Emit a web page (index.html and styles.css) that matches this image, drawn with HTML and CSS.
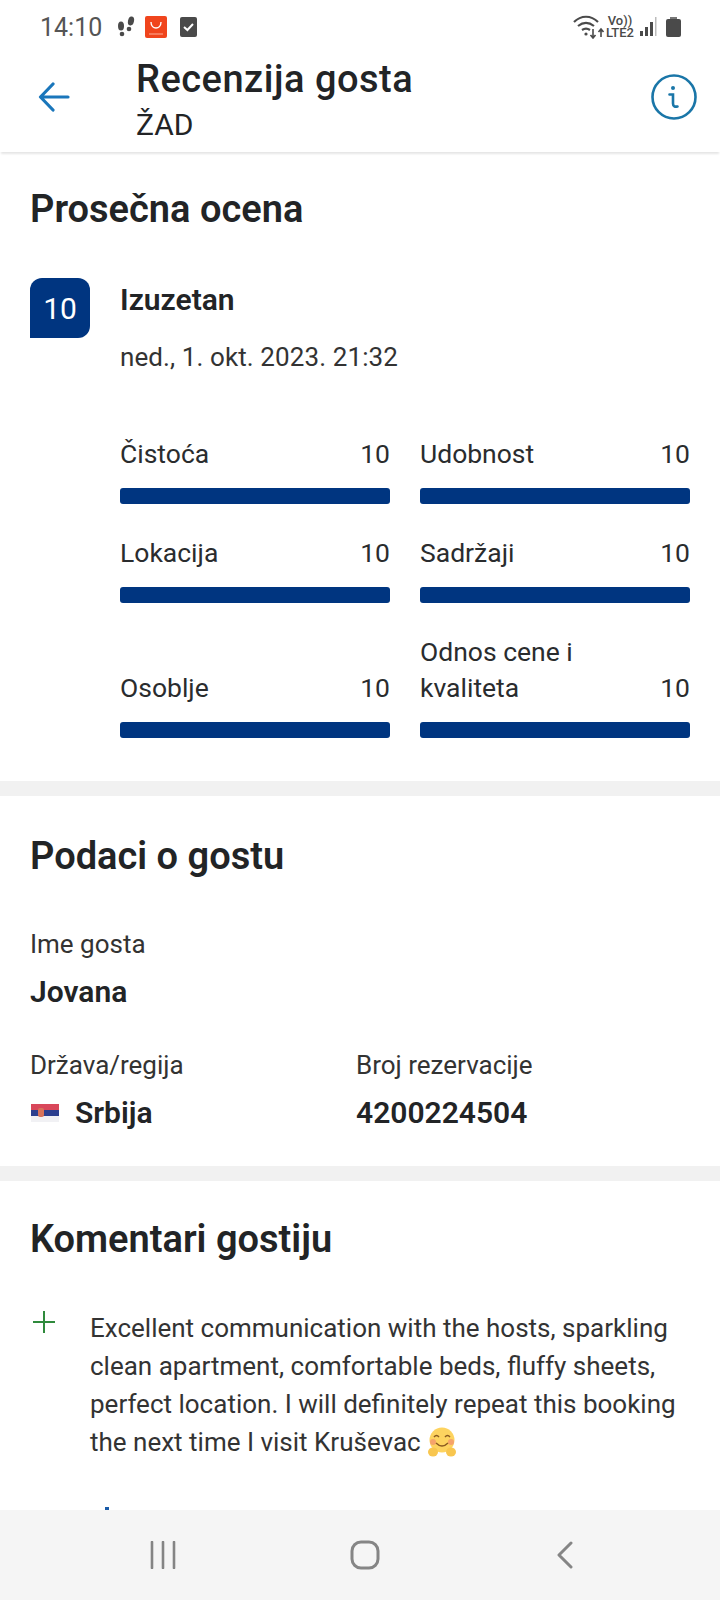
FILE: index.html
```html
<!DOCTYPE html>
<html lang="sr">
<head>
    <meta charset="utf-8">
    <title>Recenzija gosta</title>
    <link rel="stylesheet" href="styles.css">
</head>
<body>
    <div class="status-bar">
        <div class="status-left">
            <span class="clock">14:10</span>
            <svg class="steps" width="20" height="24" viewBox="0 0 20 24"><ellipse cx="5" cy="11" rx="3" ry="4.500" fill="#4a4a4a"/><circle cx="6" cy="19" r="2.300" fill="#4a4a4a"/><ellipse cx="15" cy="6" rx="3" ry="4.500" transform="rotate(12 15 6)" fill="#4a4a4a"/><circle cx="13" cy="14" r="2.300" fill="#4a4a4a"/></svg>
            <svg width="22" height="22" viewBox="0 0 22 22"><rect width="22" height="22" rx="2" fill="#f0451d"/><path d="M6 6c0 8 10 8 10 0" fill="none" stroke="#fff" stroke-width="1.400"/><path d="M4 18h14" stroke="#ffb09a" stroke-width="1"/></svg>
            <svg class="check" width="17" height="20" viewBox="0 0 17 20"><rect width="17" height="20" rx="2" fill="#4a4a4a"/><path d="M4 10l3.400 3L13 7" fill="none" stroke="#fff" stroke-width="2"/></svg>
        </div>
        <div class="status-right">
            <svg width="33" height="24" viewBox="0 0 33 24"><path d="M1 7c7-7 17-7 24 0M5 11c5-4 11-4 16 0M9 15c3-2 5-2 8 0" fill="none" stroke="#4a4a4a" stroke-width="2.200"/><circle cx="13" cy="19" r="1.600" fill="#4a4a4a"/><path d="M20 14v9M17.500 20l2.500 3 2.500-3M28 22v-8M25.500 17l2.500-3 2.500 3" fill="none" stroke="#4a4a4a" stroke-width="1.600"/></svg>
            <div class="lte"><span>Vo))</span><span>LTE2</span></div>
            <svg width="20" height="22" viewBox="0 0 20 22"><rect x="1" y="15" width="3" height="5" fill="#4a4a4a"/><rect x="6" y="11" width="3" height="9" fill="#4a4a4a"/><rect x="11" y="6" width="3" height="14" fill="#4a4a4a"/><rect x="16" y="1" width="1.500" height="19" fill="#bbb"/></svg>
            <svg class="battery" width="15" height="20" viewBox="0 0 15 20"><rect x="4" width="7" height="3" fill="#777"/><rect y="2" width="15" height="18" rx="2" fill="#4a4a4a"/></svg>
        </div>
    </div>

    <header class="app-bar">
        <svg class="back" width="32" height="30" viewBox="0 0 32 30"><path d="M30 15H3M15 2L2.500 15 15 28" fill="none" stroke="#1a76bb" stroke-width="3.200" stroke-linecap="round" stroke-linejoin="round"/></svg>
        <div class="app-title">
            <div class="title">Recenzija gosta</div>
            <div class="subtitle">ŽAD</div>
        </div>
        <svg class="info" width="46" height="46" viewBox="0 0 46 46"><circle cx="23" cy="23" r="21.500" fill="none" stroke="#1a76a8" stroke-width="2.600"/><circle cx="22" cy="14" r="2" fill="#1a76a8"/><path d="M18.500 20.500h3.500v9c0 3 2 3.500 4.500 3" fill="none" stroke="#1a76a8" stroke-width="2.600" stroke-linecap="round"/></svg>
    </header>

    <main class="content">
        <section class="block rating-block">
            <h2>Prosečna ocena</h2>
            <div class="score-row">
                <div class="score">10</div>
                <div>
                    <div class="score-name">Izuzetan</div>
                    <div class="score-date">ned., 1. okt. 2023. 21:32</div>
                </div>
            </div>
            <div class="bars">
                <div class="bar-item"><div class="bar-head"><span>Čistoća</span><span>10</span></div><div class="bar"></div></div>
                <div class="bar-item"><div class="bar-head"><span>Udobnost</span><span>10</span></div><div class="bar"></div></div>
                <div class="bar-item"><div class="bar-head"><span>Lokacija</span><span>10</span></div><div class="bar"></div></div>
                <div class="bar-item"><div class="bar-head"><span>Sadržaji</span><span>10</span></div><div class="bar"></div></div>
                <div class="bar-item"><div class="bar-head"><span>Osoblje</span><span>10</span></div><div class="bar"></div></div>
                <div class="bar-item"><div class="bar-head"><span>Odnos cene i<br>kvaliteta</span><span>10</span></div><div class="bar"></div></div>
            </div>
        </section>

        <section class="block guest-block">
            <h2>Podaci o gostu</h2>
            <div class="label first-label">Ime gosta</div>
            <div class="value">Jovana</div>
            <div class="guest-cols">
                <div>
                    <div class="label">Država/regija</div>
                    <div class="value flag-value">
                        <svg class="flag" width="28" height="18" viewBox="0 0 28 18"><rect width="28" height="6" fill="#d9475a"/><rect y="6" width="28" height="6" fill="#2c3f8f"/><rect y="12" width="28" height="6" fill="#f1f1f4"/><rect x="7" y="4" width="6" height="9" rx="2" fill="#d8735a"/></svg>
                        Srbija
                    </div>
                </div>
                <div>
                    <div class="label">Broj rezervacije</div>
                    <div class="value">4200224504</div>
                </div>
            </div>
        </section>

        <section class="block comment-block">
            <h2>Komentari gostiju</h2>
            <div class="comment">
                <svg class="plus" width="24" height="24" viewBox="0 0 24 24"><path d="M12 1v22M1 12h22" stroke="#2f8a3c" stroke-width="2"/></svg>
                <p>Excellent communication with the hosts, sparkling clean apartment, comfortable beds, fluffy sheets, perfect location. I will definitely repeat this booking the next time I visit Kruševac <svg class="emoji" width="30" height="30" viewBox="0 0 30 30"><circle cx="15" cy="13" r="12.500" fill="#fdd35f"/><circle cx="6" cy="15" r="3" fill="#f6a36b"/><circle cx="24" cy="15" r="3" fill="#f6a36b"/><path d="M7 10q2.500-3 5 0M18 10q2.500-3 5 0M9 16q6 6 12 0" fill="none" stroke="#8a5a20" stroke-width="1.400"/><ellipse cx="6" cy="25" rx="5" ry="4.500" fill="#f8c64f"/><ellipse cx="24" cy="25" rx="5" ry="4.500" fill="#f8c64f"/></svg></p>
            </div>
            <div class="next-dot"></div>
        </section>
    </main>

    <nav class="nav-bar">
        <svg width="26" height="28" viewBox="0 0 26 28"><path d="M2 1v26M13 1v26M24 1v26" stroke="#858585" stroke-width="2.600" stroke-linecap="round"/></svg>
        <svg class="home" width="30" height="30" viewBox="0 0 30 30"><rect x="2" y="2" width="26" height="26" rx="9" fill="none" stroke="#858585" stroke-width="3"/></svg>
        <svg width="16" height="28" viewBox="0 0 16 28"><path d="M14 2L2 14l12 12" fill="none" stroke="#858585" stroke-width="3" stroke-linecap="round" stroke-linejoin="round"/></svg>
    </nav>
</body>
</html>
```

FILE: styles.css
```css
* {
    padding: 0;
    margin: 0;
    box-sizing: border-box;
}
html, body {
    height: 1600px;
    overflow: hidden;
}
body {
    display: flex;
    flex-direction: column;
    background: #fff;
    color: #222426;
    font-family: Roboto, "Noto Sans", sans-serif;
}

.status-bar {
    height: 50px;
    flex: none;
    display: flex;
    justify-content: space-between;
    align-items: center;
    padding: 4px 39px 0 40px;
}
.status-left, .status-right {
    display: flex;
    align-items: center;
}
.clock {
    font-size: 25px;
    color: #555;
    margin-right: 14px;
}
.steps { margin-right: 9px; }
.check { margin-left: 13px; }
.lte {
    display: flex;
    flex-direction: column;
    align-items: center;
    font-size: 13px;
    line-height: 12px;
    font-weight: 500;
    color: #4a4a4a;
    margin: 0 5px 0 0;
}
.battery { margin-left: 7px; }

.app-bar {
    height: 102px;
    flex: none;
    display: flex;
    align-items: center;
    padding: 0 23px 0 38px;
    box-shadow: 0 3px 2px -1px rgba(0, 0, 0, 0.1);
    position: relative;
}
.back { margin: 0 2px 8px 0; }
.info { margin-bottom: 8px; }
.app-title {
    flex: 1;
    margin-left: 64px;
}
.title {
    font-size: 38px;
    line-height: 44px;
    font-weight: 500;
    letter-spacing: 0.5px;
}
.subtitle {
    font-size: 30px;
    line-height: 40px;
    margin-top: 4px;
}

.block {
    padding: 0 30px;
    border-bottom: 15px solid #f1f1f1;
}
h2 {
    font-size: 38px;
    line-height: 44px;
    font-weight: 600;
}

.rating-block {
    height: 644px;
    padding-top: 35px;
}
.score-row {
    display: flex;
    gap: 30px;
    margin-top: 47px;
}
.score {
    width: 60px;
    height: 60px;
    background: #003580;
    color: #fff;
    border-radius: 12px 12px 12px 0;
    font-size: 30px;
    display: flex;
    align-items: center;
    justify-content: center;
}
.score-name {
    font-size: 30px;
    line-height: 44px;
    font-weight: 600;
}
.score-date {
    font-size: 26px;
    line-height: 36px;
    letter-spacing: 0.1px;
    margin-top: 17px;
    color: #333;
}
.bars {
    margin: 61px 0 0 90px;
    display: grid;
    grid-template-columns: 270px 270px;
    column-gap: 30px;
    row-gap: 31px;
    align-items: end;
}
.bar-head {
    display: flex;
    justify-content: space-between;
    align-items: flex-end;
    font-size: 26.500px;
    line-height: 36px;
    color: #2a2c2e;
}
.bar {
    height: 16px;
    margin-top: 16px;
    background: #003580;
    border-radius: 3px;
}

.guest-block {
    height: 385px;
    padding-top: 38px;
}
.label {
    font-size: 26px;
    line-height: 36px;
    color: #333;
}
.first-label { margin-top: 48px; }
.value {
    font-size: 30px;
    line-height: 40px;
    font-weight: 600;
    margin-top: 10px;
}
.guest-cols {
    display: grid;
    grid-template-columns: 326px 1fr;
    margin-top: 35px;
}
.flag-value {
    display: flex;
    align-items: center;
    gap: 16px;
    padding-left: 1px;
}

.comment-block {
    padding-top: 36px;
    border-bottom: 0;
}
.comment {
    display: flex;
    margin-top: 48px;
}
.plus {
    flex: none;
    margin: 1px 0 0 2px;
}
.comment p {
    margin-left: 34px;
    font-size: 26px;
    line-height: 38px;
    color: #333;
}
.emoji { vertical-align: -6px; }
.next-dot {
    width: 4px;
    height: 4px;
    margin: 46px 0 0 75px;
    background: #1a5ba8;
}

.content {
    flex: 1;
    min-height: 0;
    overflow: hidden;
}
.nav-bar {
    height: 90px;
    flex: none;
    background: #f5f5f5;
    display: flex;
    align-items: center;
    justify-content: space-between;
    padding: 0 147px 0 150px;
}
.home { margin-left: -4px; }
```
